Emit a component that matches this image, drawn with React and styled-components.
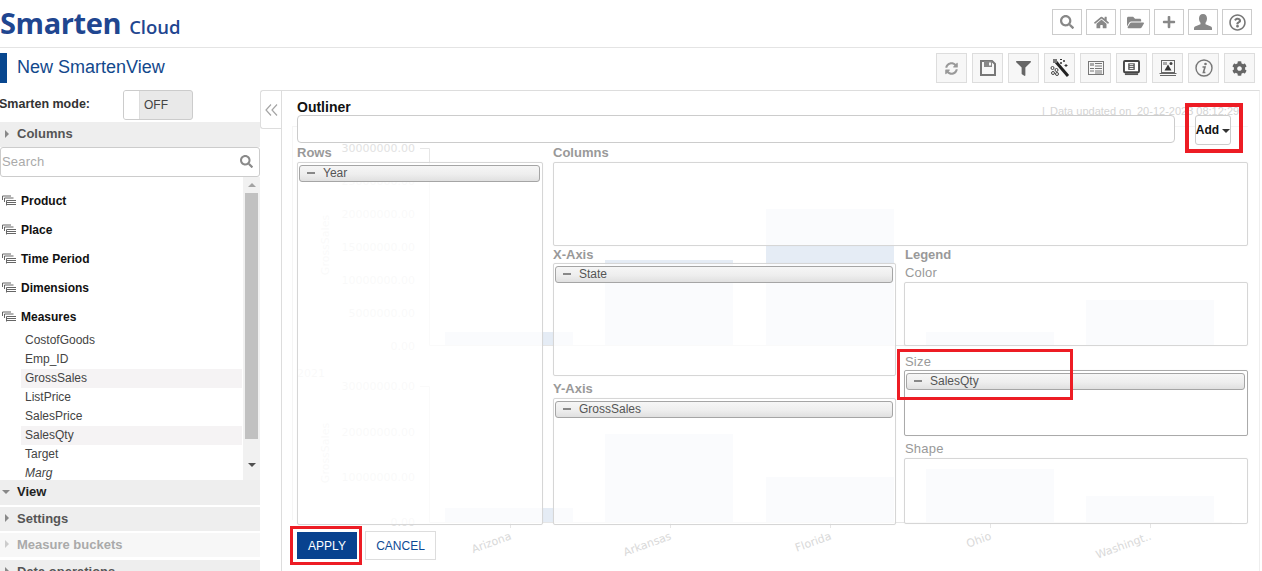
import React from 'react';
import styled, { createGlobalStyle } from 'styled-components';
import {
  FaSearch, FaHome, FaFolderOpen, FaPlus, FaRegQuestionCircle,
  FaSyncAlt, FaFilter, FaCog,
} from 'react-icons/fa';

const GlobalStyle = createGlobalStyle`
  html, body {
    margin: 0;
    padding: 0;
    background: #fff;
    overflow: hidden;
  }
  * { box-sizing: border-box; }
  body {
    font-family: "Liberation Sans", Arial, sans-serif;
    color: #333;
  }
`;

const Page = styled.div`
  width: 1262px;
  height: 571px;
  overflow: hidden;
  display: flex;
  flex-direction: column;
`;

const Header = styled.header`
  height: 48px;
  flex: none;
  border-bottom: 1px solid #e4e4e4;
  display: flex;
  align-items: flex-start;
  justify-content: space-between;
  padding: 9px 10px 0 0;
`;

const Logo = styled.div`
  color: #1f4690;
  font-family: "Open Sans", sans-serif;
  font-weight: 700;
  font-size: 29px;
  line-height: 30px;
  margin-top: -1px;
  letter-spacing: -0.4px;

  span {
    font-size: 18.5px;
    font-weight: 600;
    margin-left: 8px;
    letter-spacing: 0;
  }
`;

const IconRow = styled.div`
  display: flex;
  gap: ${(p) => p.$gap}px;
`;

const TopButton = styled.div`
  width: 30px;
  height: 26px;
  border: 1px solid #ccc;
  background: #fff;
  color: #888;
  display: flex;
  align-items: center;
  justify-content: center;
`;

const TitleBar = styled.div`
  height: 42px;
  flex: none;
  display: flex;
  justify-content: space-between;
  padding: 5px 7px 0 0;
`;

const Title = styled.h1`
  margin: 0;
  height: 30px;
  border-left: 7px solid #08478f;
  padding-left: 10px;
  font-size: 18px;
  font-weight: 400;
  line-height: 28px;
  color: #12488c;
`;

const ToolButton = styled.div`
  width: 31px;
  height: 30px;
  border: 1px solid #ddd;
  background: #f7f7f7;
  color: #777;
  display: flex;
  align-items: center;
  justify-content: center;
`;

const Main = styled.main`
  flex: 1;
  display: flex;
  min-height: 0;
`;

const Sidebar = styled.aside`
  width: 260px;
  flex: none;
  display: flex;
  flex-direction: column;
`;

const ModeRow = styled.div`
  height: 32px;
  flex: none;
  display: flex;
  align-items: flex-start;
`;

const ModeLabel = styled.span`
  width: 124px;
  margin-left: -1px;
  margin-top: 7px;
  font-size: 12.5px;
  font-weight: 700;
  color: #333;
`;

const Toggle = styled.div`
  width: 70px;
  height: 30px;
  border: 1px solid #ccc;
  border-radius: 3px;
  background: #e9e9e9;
  display: flex;
  align-items: center;
  font-size: 12px;
  color: #444;
  overflow: hidden;

  i {
    width: 16px;
    height: 100%;
    background: #fff;
    border-right: 1px solid #ddd;
    margin-right: 4px;
  }
`;

const SectionHead = styled.div`
  height: ${(p) => p.$h || 24}px;
  flex: none;
  margin-bottom: ${(p) => p.$mb || 0}px;
  background: ${(p) => (p.$faded ? '#f7f7f7' : '#eee')};
  color: ${(p) => (p.$faded ? '#aaa' : p.$dark ? '#222' : '#555')};
  font-size: 13px;
  font-weight: 700;
  display: flex;
  align-items: center;
  padding: 0 0 2px 5px;
  gap: 8px;
`;

const ArrowRight = styled.i`
  width: 0;
  height: 0;
  border-left: 4px solid ${(p) => (p.$faded ? '#ccc' : '#888')};
  border-top: 4px solid transparent;
  border-bottom: 4px solid transparent;
`;

const ArrowDown = styled.i`
  width: 0;
  height: 0;
  margin-right: -1px;
  margin-left: -3px;
  border-top: 4px solid #888;
  border-left: 4px solid transparent;
  border-right: 4px solid transparent;
`;

const SearchBox = styled.div`
  height: 30px;
  flex: none;
  border: 1px solid #ccc;
  border-radius: 3px;
  display: flex;
  align-items: center;
  justify-content: space-between;
  padding: 0 6px 2px 1px;
  font-size: 13px;
  color: #aaa;
  letter-spacing: 0.2px;

  svg {
    color: #8a8a8a;
    font-size: 13px;
  }
`;

const ListArea = styled.div`
  height: 303px;
  flex: none;
  display: flex;
  overflow: hidden;
`;

const List = styled.div`
  flex: 1;
  overflow: hidden;
  padding-top: 14px;
  padding-left: 2px;
`;

const Group = styled.div`
  height: 29px;
  display: flex;
  align-items: center;
  gap: 5px;
  font-size: 12px;
  font-weight: 700;
  color: #111;
  padding-bottom: 9px;
`;

const Leaves = styled.div`
  margin-top: -5px;
`;

const Leaf = styled.div`
  height: 19px;
  line-height: 19px;
  margin-left: 19px;
  margin-right: 1px;
  padding-left: 4px;
  font-size: 12px;
  color: #444;
  font-style: ${(p) => (p.$italic ? 'italic' : 'normal')};
  background: ${(p) => (p.$marked ? '#f5f3f4' : 'transparent')};
`;

const Scrollbar = styled.div`
  width: 17px;
  flex: none;
  background: #f1f1f1;
  display: flex;
  flex-direction: column;
  align-items: center;
  padding-top: 6px;
`;

const ScrollThumb = styled.div`
  width: 13px;
  height: 246px;
  margin: 6px 0 24px;
  background: #c1c1c1;
`;

const ScrollUp = styled.i`
  border-bottom: 4px solid #a3a3a3;
  border-left: 4px solid transparent;
  border-right: 4px solid transparent;
`;

const ScrollDown = styled.i`
  border-top: 4px solid #505050;
  border-left: 4px solid transparent;
  border-right: 4px solid transparent;
`;

const CollapseTab = styled.div`
  width: 21px;
  height: 39px;
  flex: none;
  border: 1px solid #ddd;
  border-right: none;
  border-radius: 3px 0 0 3px;
  display: flex;
  align-items: center;
  justify-content: center;
`;

const Content = styled.section`
  flex: 1;
  position: relative;
  border-left: 1px solid #ddd;
  border-top: 1px solid #ddd;
  margin-right: 2px;
  border-right: 1px solid #eee;
  padding: 9px 0 0 15px;
`;

const ChartLayer = styled.svg`
  position: absolute;
  left: 0;
  top: 0;
  width: 978px;
  height: 480px;
  font-family: "DejaVu Sans", sans-serif;
`;

const Dialog = styled.div`
  position: relative;
  width: 951px;
`;

const OutlinerTitle = styled.div`
  font-size: 14px;
  font-weight: 700;
  color: #111;
  line-height: 15px;
`;

const OutlinerRow = styled.div`
  display: flex;
  align-items: flex-start;
  justify-content: space-between;
  height: 30px;
  width: 934px;
`;

const OutlinerInput = styled.div`
  width: 878px;
  height: 28px;
  border: 1px solid #ccc;
  border-radius: 4px;
  background: #fff;
`;

const AddButton = styled.div`
  width: 36px;
  height: 30px;
  border: 1px solid #ccc;
  border-radius: 3px;
  background: #fff;
  color: #111;
  font-size: 12px;
  font-weight: 700;
  display: flex;
  align-items: center;
  justify-content: center;
  gap: 3px;

  i {
    border-top: 4px solid #333;
    border-left: 4px solid transparent;
    border-right: 4px solid transparent;
    margin-top: 2px;
  }
`;

const Zones = styled.div`
  display: flex;
  gap: 10px;
`;

const ZoneColumn = styled.div`
  width: ${(p) => p.$w}px;
  flex: none;
`;

const ZoneGrid = styled.div`
  width: 695px;
  display: grid;
  grid-template-columns: 343px 344px;
  column-gap: 8px;
`;

const WideCell = styled.div`
  grid-column: 1 / 3;
`;

const ZoneLabel = styled.div`
  height: ${(p) => p.$h || 17}px;
  margin-top: ${(p) => p.$mt || 0}px;
  padding-left: ${(p) => p.$pl || 0}px;
  line-height: 15px;
  font-size: 13px;
  font-weight: ${(p) => (p.$plain ? 400 : 700)};
  color: #999;
  letter-spacing: ${(p) => (p.$plain ? '0.2px' : 0)};
`;

const DropZone = styled.div`
  height: ${(p) => p.$h}px;
  border: 1px solid ${(p) => (p.$active ? '#aaa' : '#d6d6d6')};
  border-radius: 2px;
  background: rgba(255, 255, 255, 0.8);
  box-shadow: 0 0 1px rgba(0, 0, 0, 0.1);
  padding: 2px 2px 0 1px;
`;

const Chip = styled.div`
  height: 17px;
  border: 1px solid #a5a5a5;
  border-radius: 3px;
  background: linear-gradient(#f6f6f6, #eee 55%, #e0e0e0);
  display: flex;
  align-items: center;
  padding: 0 0 1px 7px;
  gap: 8px;
  font-size: 12px;
  color: #555;

  i {
    width: 8px;
    height: 2px;
    background: #888;
  }
`;

const Actions = styled.div`
  display: flex;
  align-items: center;
  gap: 8px;
  margin-top: 6px;
`;

const ApplyButton = styled.div`
  width: 60px;
  height: 27px;
  background: #08428f;
  color: #fff;
  font-size: 12px;
  display: flex;
  align-items: center;
  justify-content: center;
`;

const CancelButton = styled.div`
  width: 71px;
  height: 29px;
  border: 1px solid #ddd;
  background: #fff;
  color: #0d4a94;
  font-size: 12px;
  display: flex;
  align-items: center;
  justify-content: center;
`;

// red annotation boxes, given in page coordinates
const Callout = styled.div`
  position: absolute;
  left: ${(p) => p.$x - 282}px;
  top: ${(p) => p.$y - 91}px;
  width: ${(p) => p.$w}px;
  height: ${(p) => p.$h}px;
  border: ${(p) => p.$b || 3}px solid #ed1c24;
  pointer-events: none;
`;

const AxisLine = styled.path`
  fill: none;
  stroke: ${(p) => p.$color || '#e6e6e6'};
  stroke-width: 1;
`;

const Bar = styled.rect`
  fill: #e5ecf5;
`;

const TickText = styled.text`
  fill: #e2e2e2;
  font-size: 11px;
  text-anchor: ${(p) => (p.$middle ? 'middle' : 'end')};
`;

const StateText = styled.text`
  fill: #d9d9d9;
  font-size: 11px;
  text-anchor: end;
`;

const UpdatedText = styled.text`
  fill: #d4d4d4;
  font-family: "Liberation Sans", Arial, sans-serif;
  font-size: 11px;
`;

const StackIcon = () => (
  <svg width="14" height="12" viewBox="0 0 14 12" fill="none" stroke="#666" strokeWidth="1">
    <path d="M0.5 5V1H9M2.5 7V3H11.5M4.5 10.5V5.5H14M5 7.5H14M5 9.5H14" />
  </svg>
);

const UserIcon = () => (
  <svg width="18" height="16" viewBox="0 0 18 16" fill="#888">
    <path d="M9 0C6.4 0 5 2 5 4.500c0 1.800.7 3.300 1.500 4.200v1.500L1 12.500C.3 12.900 0 13.500 0 14.200V16h18v-1.800c0-.7-.3-1.300-1-1.700l-5.500-2.300V8.700c.8-.9 1.500-2.400 1.500-4.200C13 2 11.600 0 9 0z" />
  </svg>
);

const SaveIcon = () => (
  <svg width="16" height="16" viewBox="0 0 16 16" fill="none">
    <path d="M1 1h11l3 3v11H1z" stroke="#777" strokeWidth="2" />
    <path d="M4 1h8v6H4z" fill="#888" />
    <path d="M9 2.500h2v3H9z" fill="#f7f7f7" />
  </svg>
);

const WandIcon = () => (
  <svg width="20" height="20" viewBox="0 0 20 20" fill="none">
    <path d="M6 4l12 14" stroke="#222" strokeWidth="3" />
    <path d="M3 1h4v4H3z" fill="#777" />
    <path d="M10 1.500h2M14 2v2M13 3h2M16 6v3M14.500 7.500h3M11 4v2M10 5h2" stroke="#333" strokeWidth="1" />
    <circle cx="2.500" cy="10" r="1.500" stroke="#444" />
    <circle cx="6.500" cy="12" r="1.500" stroke="#444" />
    <circle cx="3" cy="15" r="1.500" stroke="#444" />
    <circle cx="7" cy="16" r="1.500" stroke="#444" />
  </svg>
);

const ListPanelIcon = () => (
  <svg width="16" height="16" viewBox="0 0 16 16" fill="none" stroke="#777">
    <rect x="0.500" y="1.500" width="15" height="13" />
    <rect x="2" y="3" width="4" height="3" fill="#aaa" stroke="none" />
    <path d="M7 3.500h7M7 6h7M7 8.500h7M7 11h7M7 13h7M2 8.500h4M2 11h4" />
  </svg>
);

const ScreenIcon = () => (
  <svg width="17" height="16" viewBox="0 0 18 17" fill="none">
    <rect x="1" y="1" width="16" height="12" rx="1" fill="#fff" stroke="#444" strokeWidth="2" />
    <path d="M5.500 3.500h7v7h-7z" fill="#555" />
    <path d="M7 5h4M7 7h4M7 9h4" stroke="#fff" />
    <path d="M2 15h14" stroke="#555" strokeWidth="2" />
  </svg>
);

const LaptopImageIcon = () => (
  <svg width="18" height="16" viewBox="0 0 18 16" fill="none">
    <rect x="2.500" y="0.500" width="13" height="12" stroke="#666" />
    <rect x="4" y="2" width="4" height="3" fill="#aaa" />
    <circle cx="12" cy="3.500" r="1.500" fill="#444" />
    <path d="M9 4.500l3.500 6h-7z" fill="#333" />
    <path d="M0.500 13.500h17M1 15.500h16" stroke="#666" />
  </svg>
);

const InfoIcon = () => (
  <svg width="18" height="18" viewBox="0 0 18 18" fill="none">
    <circle cx="9" cy="9" r="8" stroke="#777" strokeWidth="1.400" />
    <circle cx="10.500" cy="5" r="1.300" fill="#777" />
    <path d="M7.500 8h2.500l-1.600 5.500h2" stroke="#777" strokeWidth="1.600" />
  </svg>
);

const ChevronsLeft = () => (
  <svg width="13" height="12" viewBox="0 0 13 12" fill="none" stroke="#a5a5a5" strokeWidth="1.200">
    <path d="M6 0.500L1 6l5 5.500M12 0.500L7 6l5 5.500" />
  </svg>
);

const topIcons = [
  <FaSearch key="search" size={14} />,
  <FaHome key="home" size={15} />,
  <FaFolderOpen key="folder" size={17} />,
  <FaPlus key="plus" size={14} />,
  <UserIcon key="user" />,
  <FaRegQuestionCircle key="help" size={17} color="#777" />,
];

const tools = [
  <FaSyncAlt key="sync" size={13} color="#999" />,
  <SaveIcon key="save" />,
  <FaFilter key="filter" size={15} color="#666" />,
  <WandIcon key="wand" />,
  <ListPanelIcon key="list" />,
  <ScreenIcon key="screen" />,
  <LaptopImageIcon key="laptop" />,
  <InfoIcon key="info" />,
  <FaCog key="cog" size={15} color="#666" />,
];

const groups = ['Product', 'Place', 'Time Period', 'Dimensions', 'Measures'];
const measures = [
  { name: 'CostofGoods' },
  { name: 'Emp_ID' },
  { name: 'GrossSales', marked: true },
  { name: 'ListPrice' },
  { name: 'SalesPrice' },
  { name: 'SalesQty', marked: true },
  { name: 'Target' },
  { name: 'Marg', italic: true },
];

const upperTicks = [
  ['30000000.00', 148], ['25000000.00', 181], ['20000000.00', 214],
  ['15000000.00', 247], ['10000000.00', 280], ['5000000.00', 313], ['0.00', 346],
];
const lowerTicks = [
  ['30000000.00', 386], ['20000000.00', 432], ['10000000.00', 477], ['0.00', 522],
];
const upperBars = [[445, 332], [605, 260], [766, 209], [926, 332], [1086, 300]];
const lowerBars = [[445, 508], [605, 434], [766, 477], [926, 469], [1086, 496]];
const stateNames = [
  ['Arizona', 510], ['Arkansas', 670], ['Florida', 830], ['Ohio', 990], ['Washingt..', 1150],
];

const Chart = () => (
  <ChartLayer viewBox="282 91 978 480">
    <AxisLine $color="#f5f5f5" d="M292 126.500H1248M292.500 126V520" />
    <AxisLine d="M420 148.500H429.500V345.500H1232" />
    <AxisLine d="M420 386.500H429.500V522.500H1232" />
    {upperTicks.map(([label, y]) => (
      <TickText key={y} x="415" y={y + 4}>{label}</TickText>
    ))}
    {lowerTicks.map(([label, y]) => (
      <TickText key={y} x="415" y={y + 4}>{label}</TickText>
    ))}
    <TickText x="325" y="377">2021</TickText>
    <TickText $middle transform="translate(329 245) rotate(-90)">GrossSales</TickText>
    <TickText $middle transform="translate(329 453) rotate(-90)">GrossSales</TickText>
    {upperBars.map(([x, y]) => (
      <Bar key={x} x={x} y={y} width="128" height={345 - y} />
    ))}
    {lowerBars.map(([x, y]) => (
      <Bar key={x} x={x} y={y} width="128" height={522 - y} />
    ))}
    {stateNames.map(([name, x]) => (
      <g key={name}>
        <AxisLine d={`M${x}.5 523V528`} />
        <StateText transform={`translate(${x + 2} 539) rotate(-20)`}>{name}</StateText>
      </g>
    ))}
    <UpdatedText x="1042" y="115">|</UpdatedText>
    <UpdatedText x="1050" y="115">Data updated on</UpdatedText>
    <UpdatedText x="1137" y="115">20-12-2023 08:12:29</UpdatedText>
  </ChartLayer>
);

const ZoneChip = ({ children }) => (
  <Chip>
    <i />
    {children}
  </Chip>
);

const App = () => (
  <Page>
    <GlobalStyle />
    <Header>
      <Logo>Smarten<span>Cloud</span></Logo>
      <IconRow $gap={4}>
        {topIcons.map((icon) => (
          <TopButton key={icon.key}>{icon}</TopButton>
        ))}
      </IconRow>
    </Header>
    <TitleBar>
      <Title>New SmartenView</Title>
      <IconRow $gap={5}>
        {tools.map((tool) => (
          <ToolButton key={tool.key}>{tool}</ToolButton>
        ))}
      </IconRow>
    </TitleBar>
    <Main>
      <Sidebar>
        <ModeRow>
          <ModeLabel>Smarten mode:</ModeLabel>
          <Toggle><i />OFF</Toggle>
        </ModeRow>
        <SectionHead $h={25}><ArrowRight />Columns</SectionHead>
        <SearchBox>Search<FaSearch /></SearchBox>
        <ListArea>
          <List>
            {groups.map((name) => (
              <Group key={name}><StackIcon />{name}</Group>
            ))}
            <Leaves>
              {measures.map((m) => (
                <Leaf key={m.name} $marked={m.marked} $italic={m.italic}>{m.name}</Leaf>
              ))}
            </Leaves>
          </List>
          <Scrollbar>
            <ScrollUp />
            <ScrollThumb />
            <ScrollDown />
          </Scrollbar>
        </ListArea>
        <SectionHead $h={25} $mb={2} $dark><ArrowDown />View</SectionHead>
        <SectionHead $mb={2}><ArrowRight />Settings</SectionHead>
        <SectionHead $mb={3} $faded><ArrowRight $faded />Measure buckets</SectionHead>
        <SectionHead><ArrowRight />Data operations</SectionHead>
      </Sidebar>
      <CollapseTab><ChevronsLeft /></CollapseTab>
      <Content>
        <Chart />
        <Dialog>
          <OutlinerTitle>Outliner</OutlinerTitle>
          <OutlinerRow>
            <OutlinerInput />
            <AddButton>Add<i /></AddButton>
          </OutlinerRow>
          <Zones>
            <ZoneColumn $w={246}>
              <ZoneLabel>Rows</ZoneLabel>
              <DropZone $h={363}><ZoneChip>Year</ZoneChip></DropZone>
            </ZoneColumn>
            <ZoneGrid>
              <WideCell>
                <ZoneLabel>Columns</ZoneLabel>
                <DropZone $h={84} />
              </WideCell>
              <div>
                <ZoneLabel $mt={1} $h={16}>X-Axis</ZoneLabel>
                <DropZone $h={113}><ZoneChip>State</ZoneChip></DropZone>
                <ZoneLabel $mt={5}>Y-Axis</ZoneLabel>
                <DropZone $h={127}><ZoneChip>GrossSales</ZoneChip></DropZone>
              </div>
              <div>
                <ZoneLabel $mt={1} $pl={1}>Legend</ZoneLabel>
                <ZoneLabel $mt={1} $pl={1} $plain>Color</ZoneLabel>
                <DropZone $h={64} />
                <ZoneLabel $mt={8} $h={16} $pl={1} $plain>Size</ZoneLabel>
                <DropZone $h={66} $active><ZoneChip>SalesQty</ZoneChip></DropZone>
                <ZoneLabel $mt={5} $pl={1} $plain>Shape</ZoneLabel>
                <DropZone $h={66} />
              </div>
            </ZoneGrid>
          </Zones>
          <Actions>
            <ApplyButton>APPLY</ApplyButton>
            <CancelButton>CANCEL</CancelButton>
          </Actions>
        </Dialog>
        <Callout $x={1185} $y={103} $w={58} $h={50} $b={4} />
        <Callout $x={897} $y={349} $w={176} $h={51} />
        <Callout $x={290} $y={526} $w={72} $h={39} />
      </Content>
    </Main>
  </Page>
);

export default App;
